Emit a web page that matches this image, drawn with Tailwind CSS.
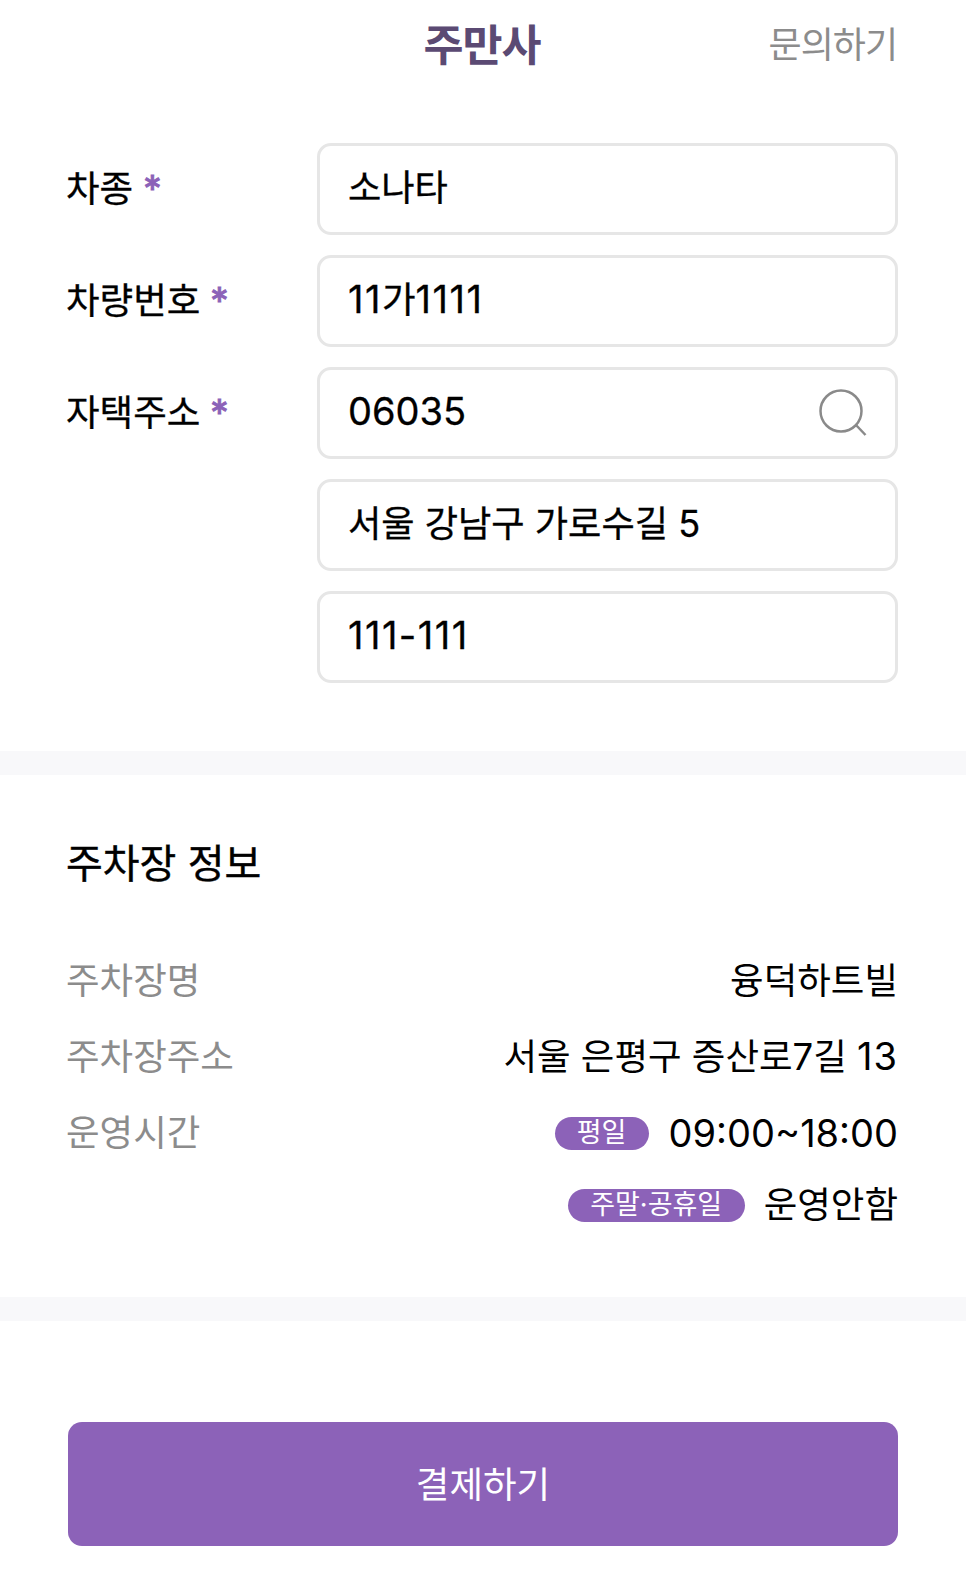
<!doctype html>
<html lang="ko">
<head>
<meta charset="utf-8">
<script src="https://cdn.jsdelivr.net/npm/@tailwindcss/browser@4"></script>
</head>
<body class="bg-white">
<div class="w-[966px] h-[1583px] overflow-hidden bg-white text-[36.2px] text-black font-['Inter','Noto_Sans_CJK_KR',sans-serif] leading-none">
  <header class="relative h-[143px] pt-[17px] flex justify-center">
    <h1 class="text-[43.5px] leading-[56px] font-bold text-[#5b4a73] tracking-[-1px] -ml-[2px]">주만사</h1>
    <span class="absolute right-[69px] top-[17px] text-[36px] leading-[56px] text-[#8c8c8c] tracking-[-1px]">문의하기</span>
  </header>

  <section class="pl-[66px] pr-[68px] flex flex-col gap-[20px]">
    <div class="flex items-center">
      <div class="w-[251px] text-[36.5px] [-webkit-text-stroke:0.3px_black] flex gap-[10px]"><span>차종</span><span class="text-[#8c62b8] [-webkit-text-stroke:1px_#8c62b8]">*</span></div>
      <div class="w-[581px] h-[92px] rounded-[14px] border-[3px] border-[#e6e6e6] pl-[28px] pr-[29px] pb-[2px] flex items-center [-webkit-text-stroke:0.3px_black]">소나타</div>
    </div>
    <div class="flex items-center">
      <div class="w-[251px] text-[36.5px] [-webkit-text-stroke:0.3px_black] flex gap-[10px]"><span>차량번호</span><span class="text-[#8c62b8] [-webkit-text-stroke:1px_#8c62b8]">*</span></div>
      <div class="w-[581px] h-[92px] rounded-[14px] border-[3px] border-[#e6e6e6] pl-[28px] pr-[29px] pb-[4px] flex items-center [-webkit-text-stroke:0.3px_black]"><span class="text-[38px] tracking-[1.5px]">11<span class="text-[36.5px] tracking-normal">가</span>1111</span></div>
    </div>
    <div class="flex items-center">
      <div class="w-[251px] text-[36.5px] [-webkit-text-stroke:0.3px_black] flex gap-[10px]"><span>자택주소</span><span class="text-[#8c62b8] [-webkit-text-stroke:1px_#8c62b8]">*</span></div>
      <div class="w-[581px] h-[92px] rounded-[14px] border-[3px] border-[#e6e6e6] pl-[28px] pr-[28px] flex items-center justify-between">
        <span class="text-[38px] pb-[4px] [-webkit-text-stroke:0.3px_black]">06035</span>
        <svg class="w-[48px] h-[48px]" viewBox="0 0 48 48" fill="none" stroke="#8a8a8a" stroke-width="2.5"><circle cx="22" cy="22" r="20.5"/><path d="M37 36l9.5 10"/></svg>
      </div>
    </div>
    <div class="flex items-center">
      <div class="w-[251px]"></div>
      <div class="w-[581px] h-[92px] rounded-[14px] border-[3px] border-[#e6e6e6] pl-[28px] pr-[29px] pb-[2px] flex items-center [-webkit-text-stroke:0.3px_black]">서울 강남구 가로수길 5</div>
    </div>
    <div class="flex items-center">
      <div class="w-[251px]"></div>
      <div class="w-[581px] h-[92px] rounded-[14px] border-[3px] border-[#e6e6e6] pl-[28px] pr-[29px] pb-[4px] flex items-center text-[38px] tracking-[1.5px] [-webkit-text-stroke:0.3px_black]">111-111</div>
    </div>
  </section>

  <div class="h-[24px] mt-[68px] bg-[#f8f8fa]"></div>

  <section class="pl-[66px] pr-[68px] pt-[61px]">
    <h2 class="text-[40px] leading-[56px] font-normal [-webkit-text-stroke:0.4px_black]">주차장 정보</h2>
    <dl class="mt-[51px] flex flex-col text-[36.5px]">
      <div class="flex justify-between items-center h-[76px]"><dt class="text-[#8c8c8c]">주차장명</dt><dd>융덕하트빌</dd></div>
      <div class="flex justify-between items-center h-[76px]"><dt class="text-[#8c8c8c]">주차장주소</dt><dd class="pb-[2px]">서울 은평구 증산로7길 <span class="text-[38px] tracking-[1px]">13</span></dd></div>
      <div class="flex justify-between items-center h-[76px]"><dt class="text-[#8c8c8c]">운영시간</dt>
        <dd class="flex items-center gap-[20px]"><span class="h-[33px] w-[94px] rounded-full bg-[#8c62b8] text-white text-[27px] pb-[2px] flex items-center justify-center">평일</span><span class="text-[38px]">09:00~18:00</span></dd></div>
      <div class="flex justify-end items-center h-[68px]">
        <dd class="flex items-center gap-[19px]"><span class="h-[33px] w-[177px] rounded-full bg-[#8c62b8] text-white text-[27px] pb-[2px] flex items-center justify-center">주말·공휴일</span><span>운영안함</span></dd></div>
    </dl>
  </section>

  <div class="h-[24px] mt-[58px] bg-[#f8f8fa]"></div>

  <div class="px-[68px] pt-[101px]">
    <button class="w-[830px] h-[124px] rounded-[14px] bg-[#8c62b8] text-white text-[36.5px] pt-[3px]">결제하기</button>
  </div>
</div>
</body>
</html>
